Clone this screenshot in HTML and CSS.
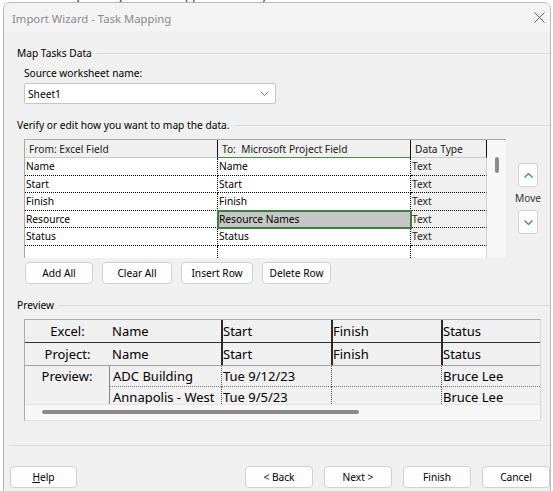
FILE: index.html
```html
<!DOCTYPE html>
<html>
<head>
<meta charset="utf-8">
<title>Import Wizard - Task Mapping</title>
<link rel="stylesheet" href="styles.css">
</head>
<body>
<div class="backdrop">later. Drag the big icon that appears when you hover over a file.</div>
<div class="dialog">
  <div class="titlebar">
    <span class="title">Import Wizard - Task Mapping</span>
    <svg class="close" width="11" height="11" viewBox="0 0 11 11"><path d="M0.5 0.5L10.5 10.5M10.5 0.5L0.5 10.5" stroke="#5e5e5e" stroke-width="1" fill="none"/></svg>
  </div>
  <div class="content">
    <div class="group-title"><span>Map Tasks Data</span><i class="rule"></i></div>
    <div class="field-label">Source worksheet name:</div>
    <div class="select">
      <span>Sheet1</span>
      <svg width="9" height="5" viewBox="0 0 9 5"><path d="M0.5 0.5L4.5 4.5L8.5 0.5" stroke="#7a7a7a" stroke-width="1" fill="none"/></svg>
    </div>
    <div class="group-title verify"><span>Verify or edit how you want to map the data.</span><i class="rule"></i></div>
    <div class="map-row">
      <div class="map-grid">
        <div class="mt">
          <div class="mh">
            <div class="hc">From: Excel Field</div>
            <div class="hc active">To:&nbsp; Microsoft Project Field</div>
            <div class="hc">Data Type</div>
          </div>
          <div class="mr"><div class="c1">Name</div><div class="c2">Name</div><div class="c3">Text</div></div>
          <div class="mr"><div class="c1">Start</div><div class="c2">Start</div><div class="c3">Text</div></div>
          <div class="mr"><div class="c1">Finish</div><div class="c2">Finish</div><div class="c3">Text</div></div>
          <div class="mr"><div class="c1">Resource</div><div class="c2 sel">Resource Names</div><div class="c3">Text</div></div>
          <div class="mr"><div class="c1">Status</div><div class="c2">Status</div><div class="c3">Text</div></div>
          <div class="mr filler"><div class="c1"></div><div class="c2"></div><div class="c3 blank"></div></div>
        </div>
        <div class="vscroll"><div class="vthumb"></div></div>
      </div>
      <div class="move">
        <button class="move-btn"><svg width="9" height="5" viewBox="0 0 9 5"><path d="M0.5 4.5L4.5 0.5L8.5 4.5" stroke="#2f7ccc" stroke-width="1.2" fill="none"/></svg></button>
        <span class="move-label">Move</span>
        <button class="move-btn"><svg width="9" height="5" viewBox="0 0 9 5"><path d="M0.5 0.5L4.5 4.5L8.5 0.5" stroke="#2f7ccc" stroke-width="1.2" fill="none"/></svg></button>
      </div>
    </div>
    <div class="actions">
      <button class="btn b-add">Add All</button>
      <button class="btn b-clear">Clear All</button>
      <button class="btn b-insert">Insert Row</button>
      <button class="btn b-delete">Delete Row</button>
    </div>
    <div class="group-title preview-title"><span>Preview</span><i class="rule"></i></div>
    <div class="preview">
      <div class="pv-row excel">
        <div class="pc lbl">Excel:</div>
        <div class="pc">Name</div>
        <div class="pc sep">Start</div>
        <div class="pc sep">Finish</div>
        <div class="pc sep">Status</div>
      </div>
      <div class="pv-row project">
        <div class="pc lbl">Project:</div>
        <div class="pc">Name</div>
        <div class="pc sep">Start</div>
        <div class="pc sep">Finish</div>
        <div class="pc sep">Status</div>
      </div>
      <div class="pv-data">
        <div class="pd lbl">Preview:</div>
        <div class="pd first name">ADC Building</div>
        <div class="pd first dsep">Tue 9/12/23</div>
        <div class="pd first dsep"></div>
        <div class="pd first dsep">Bruce Lee</div>
        <div class="pd name">Annapolis - West</div>
        <div class="pd dsep">Tue 9/5/23</div>
        <div class="pd dsep"></div>
        <div class="pd dsep">Bruce Lee</div>
      </div>
      <div class="hscroll"><div class="hthumb"></div></div>
    </div>
  </div>
  <div class="separator"></div>
  <div class="footer">
    <button class="btn fbtn help"><u>H</u>elp</button>
    <button class="btn fbtn">&lt; Back</button>
    <button class="btn fbtn">Next &gt;</button>
    <button class="btn fbtn">Finish</button>
    <button class="btn fbtn">Cancel</button>
  </div>
</div>
</body>
</html>
```

FILE: styles.css
```css
* { box-sizing: border-box; }
html, body { margin: 0; padding: 0; }
body {
  width: 553px;
  height: 491px;
  overflow: hidden;
  background: #ffffff;
  position: relative;
  font-family: "Noto Sans", "Open Sans", sans-serif;
  font-size: 10.2px;
  color: #000;
}
.backdrop {
  font-size: 12px;
  line-height: 14px;
  color: #333;
  white-space: nowrap;
  margin-top: -11px;
  padding-left: 22px;
}
.dialog {
  position: absolute;
  left: 3px;
  top: 2px;
  width: 548px;
  height: 492px;
  background: #f0f0f0;
  border: 1px solid #b8b8b8;
  border-radius: 7px 7px 0 0;
  overflow: hidden;
  display: flex;
  flex-direction: column;
}
.titlebar {
  height: 29px;
  flex: none;
  background: #f3f3f3;
  display: flex;
  align-items: center;
  padding-left: 8px;
}
.title {
  flex: 1;
  font-size: 11.3px;
  color: #8a8a8a;
  margin-top: 1px;
}
.close { margin-right: 5px; }

.content { padding-left: 13px; }
.group-title {
  display: flex;
  align-items: center;
  height: 16px;
  line-height: 16px;
  margin-top: 13px;
  white-space: nowrap;
}
.rule {
  flex: 1;
  height: 0;
  border-top: 1px solid #dadada;
  margin-left: 5px;
}
.field-label {
  margin-left: 7px;
  margin-top: 4px;
  height: 16px;
  line-height: 16px;
}
.select {
  margin-left: 7px;
  margin-top: 2px;
  width: 252px;
  height: 21px;
  background: #fff;
  border: 1px solid #c4c4c4;
  border-radius: 2px;
  display: flex;
  align-items: center;
  justify-content: space-between;
  padding: 0 6px 0 3px;
}

/* mapping grid */
.map-row {
  display: flex;
  margin-left: 7px;
  margin-top: 6px;
}
.map-grid {
  display: flex;
  width: 482px;
  height: 119px;
  border-top: 1px solid #a8a8a8;
  border-left: 1px solid #a8a8a8;
}
.mt {
  width: 462px;
  display: flex;
  flex-direction: column;
}
.mh, .mr {
  display: grid;
  grid-template-columns: 193px 193px 76px;
}
.mh { height: 18px; flex: none; }
.hc {
  border-right: 1px solid #111;
  border-bottom: 1px solid #c6c6c6;
  padding-left: 4px;
  line-height: 18px;
  white-space: nowrap;
  overflow: hidden;
  color: #1a1a1a;
}
.hc.active { border-bottom-color: #4a8a4a; padding-left: 4px; }
.mr { height: 17.5px; flex: none; }
.mr > div {
  border-bottom: 1px dotted #000;
  padding-left: 1px;
  display: flex;
  align-items: center;
  white-space: nowrap;
  overflow: hidden;
}
.c1, .c2 { background: #fff; border-right: 1px dotted #000; }
.c3 { background: #f0f0f0; border-right: 1px solid #d0d0d0; color: #222; }
.mr.filler { flex: 1; }
.mr.filler > div { border-bottom: none; }
.c3.blank { background: #fff; }
.c2.sel {
  background: #c6c6c6;
  position: relative;
  outline: 2px solid #3d7d3d;
  outline-offset: -1px;
  z-index: 1;
}
.vscroll {
  width: 19px;
  background: #f7f7f7;
  padding-top: 17px;
  padding-left: 8px;
}
.vthumb {
  width: 4px;
  height: 16px;
  background: #8b8b8b;
  border-radius: 2px;
}
.move {
  display: flex;
  flex-direction: column;
  align-items: center;
  width: 30px;
  margin-left: 7px;
  padding-top: 24px;
}
.move-btn {
  width: 20px;
  height: 24px;
  background: #fdfdfd;
  border: 1px solid #d2d2d2;
  border-radius: 3px;
  padding: 0;
  display: flex;
  align-items: center;
  justify-content: center;
}
.move-label {
  height: 23px;
  line-height: 23px;
  color: #333;
}

/* buttons */
.btn {
  height: 22px;
  background: #fdfdfd;
  border: 1px solid #d0d0d0;
  border-radius: 4px;
  font-family: inherit;
  font-size: 10.2px;
  color: #000;
  padding: 0;
}
.actions {
  display: flex;
  gap: 9px;
  margin-left: 8px;
  margin-top: 4px;
}
.b-add { width: 68px; }
.b-clear { width: 70px; }
.b-insert { width: 72px; }
.b-delete { width: 69px; }

/* preview */
.preview {
  margin-left: 7px;
  margin-top: 6px;
  width: 517px;
  height: 102px;
  border: 1px solid #acacac;
  border-right-color: #d6d6d6;
  border-bottom-color: #dedede;
  display: flex;
  flex-direction: column;
  font-size: 13px;
}
.pv-row, .pv-data {
  display: grid;
  grid-template-columns: 85px 111px 110px 110px 1fr;
}
.pv-row { height: 23px; flex: none; border-bottom: 1px solid #333; }
.pv-row.project { border-bottom-color: #a2a2a2; }
.pc {
  line-height: 22px;
  padding-left: 2px;
  white-space: nowrap;
  overflow: hidden;
}
.pc.sep { border-left: 2px solid #2a2a2a; padding-left: 0; }
.lbl { text-align: center; padding-left: 0; }
.pv-data {
  grid-template-rows: 21px 21px;
  height: 38px;
  flex: none;
  overflow: hidden;
}
.pd {
  line-height: 20px;
  white-space: nowrap;
  overflow: hidden;
  padding-left: 1px;
}
.pd.lbl {
  grid-row: 1 / span 2;
  border-right: 1px solid #8a8a8a;
  padding-left: 0;
}
.pd.name { padding-left: 3px; }
.pd.first { border-bottom: 1px dotted #777; }
.pd.dsep { border-left: 1px dotted #555; }
.hscroll {
  height: 16px;
  flex: none;
  background: #f7f7f7;
  border-top: 1px solid #e6e6e6;
  padding-top: 5px;
  padding-left: 17px;
}
.hthumb {
  width: 317px;
  height: 4px;
  background: #8a8a8a;
  border-radius: 2px;
}

/* footer */
.separator {
  margin-top: 24px;
  margin-left: 5px;
  height: 1px;
  background: #dcdcdc;
}
.footer {
  display: flex;
  gap: 11px;
  margin-top: 20px;
  padding-left: 6px;
}
.fbtn { width: 68px; }
.help { width: 67px; margin-right: auto; }
```
